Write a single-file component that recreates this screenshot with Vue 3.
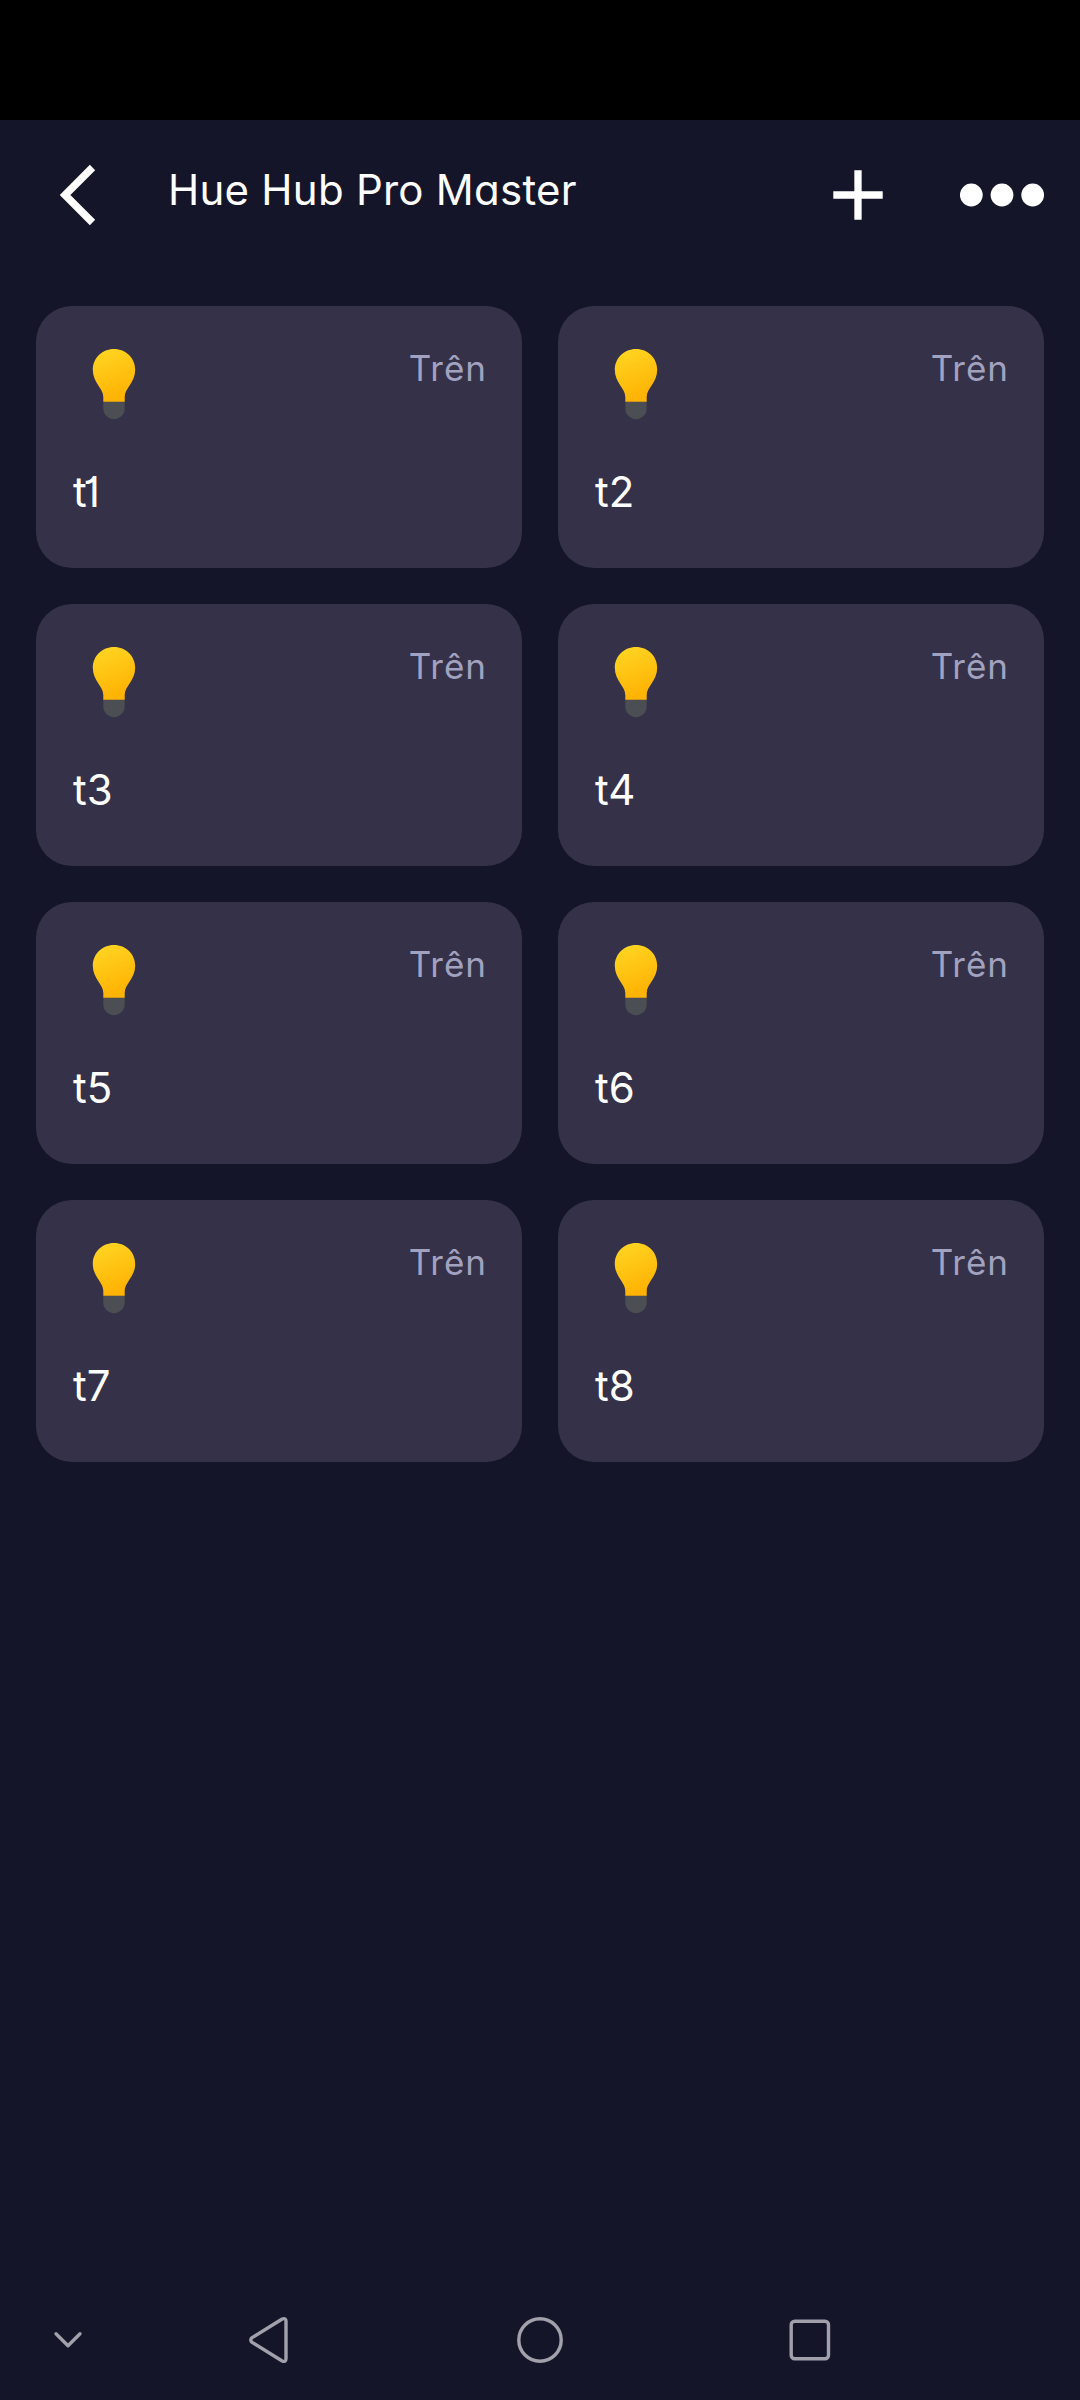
<script setup>
const lights = ['t1', 't2', 't3', 't4', 't5', 't6', 't7', 't8']
</script>

<template>
  <div class="screen">
    <div class="status"></div>
    <header class="bar">
      <svg class="back" width="36" height="62" viewBox="0 0 36 62">
        <path d="M32.5 3.5 5 31 32.5 58.500" fill="none" stroke="#fff" stroke-width="7.500" />
      </svg>
      <h1 class="title">Hue Hub Pro Master</h1>
      <svg class="add" width="50" height="50" viewBox="0 0 50 50">
        <path d="M25 .3V49.700M.3 25H49.700" stroke="#fff" stroke-width="7.300" />
      </svg>
      <svg class="more" width="84" height="24" viewBox="0 0 84 24" fill="#fff">
        <circle cx="11.300" cy="12" r="11.400" />
        <circle cx="42" cy="12" r="11.400" />
        <circle cx="72.700" cy="12" r="11.400" />
      </svg>
    </header>
    <main class="grid">
      <section v-for="(name, i) in lights" :key="name" class="card">
        <div class="top">
          <svg class="bulb" width="44" height="72" viewBox="0 0 44 72">
            <defs>
              <linearGradient :id="'glow' + i" gradientUnits="userSpaceOnUse" x1="9" y1="3" x2="27" y2="47">
                <stop offset="0" stop-color="#ffd422" />
                <stop offset="1" stop-color="#ffb404" />
              </linearGradient>
            </defs>
            <path d="M11.300 53.500H32.700V60.500a10.700 10.700 0 0 1-21.400 0Z" fill="#4b4e52" />
            <path d="M22 .9C10.100.9.8 10.100.8 21.700c0 13 10.500 18.300 10.500 27.300v4.700h21.400V49c0-9 10.500-14.300 10.500-27.300C43.200 10.100 33.900.9 22 .9Z" :fill="'url(#glow' + i + ')'" />
          </svg>
          <span class="state">Trên</span>
        </div>
        <div class="name" :class="{ tight: name.endsWith('1') }">{{ name }}</div>
      </section>
    </main>
    <nav class="nav">
      <svg width="30" height="20" viewBox="0 0 30 20">
        <path d="M3 3.800 15 15.800 27 3.800" />
      </svg>
      <svg width="42" height="50" viewBox="-.7 0 42 50">
        <path d="M34.500 4 4.400 22.600Q1.700 25 4.400 27.400L34.500 46Q38.300 47.500 38.300 43.500V6.500Q38.300 2.500 34.500 4Z" />
      </svg>
      <svg width="48" height="48" viewBox="0 0 48 48"><circle cx="24" cy="24" r="21.200" /></svg>
      <svg width="42" height="42" viewBox="0 0 42 42"><rect x="2.200" y="2.200" width="37.300" height="37.500" rx="3.500" /></svg>
    </nav>
  </div>
</template>

<style>
body {
  margin: 0;
  background: #151529;
}
</style>

<style scoped>
.screen {
  width: 1080px;
  height: 2400px;
  display: flex;
  flex-direction: column;
  background: #151529;
  color: #fff;
  font-family: Inter, "Noto Sans", sans-serif;
  font-feature-settings: "cv11", "cv01";
}
.status {
  height: 120px;
  background: #000;
}
.bar {
  height: 150px;
  box-sizing: border-box;
  padding: 0 36px 0 60px;
  display: flex;
  align-items: center;
}
.title {
  margin: -10px 0 0 72px;
  font-size: 42px;
  line-height: 60px;
  font-weight: 400;
  letter-spacing: 0.25px;
  white-space: nowrap;
}
.add {
  margin-left: auto;
}
.more {
  margin-left: 77px;
}
.grid {
  flex: 1;
  padding: 36px 36px 0;
  display: grid;
  grid-template-columns: 1fr 1fr;
  grid-auto-rows: 262px;
  align-content: start;
  gap: 36px;
}
.card {
  box-sizing: border-box;
  padding: 36px;
  border-radius: 36px;
  background: #343148;
}
.top {
  height: 100px;
  display: flex;
  justify-content: space-between;
}
.bulb {
  margin: 6px 0 0 20px;
}
.state {
  margin: -1px -1px 0 0;
  color: #a1a2bf;
  font-size: 35px;
  line-height: 54px;
  letter-spacing: 1px;
}
.name {
  margin: 20px 0 0 1px;
  font-size: 42px;
  line-height: 60px;
}
.tight {
  letter-spacing: -3.5px;
}
.nav {
  height: 120px;
  display: grid;
  grid-template-columns: 136px 264px 280px 260px;
  place-items: center;
}
.nav svg {
  fill: none;
  stroke: #a1a0ab;
  stroke-width: 3.4;
  stroke-linecap: round;
  stroke-linejoin: round;
}
</style>
